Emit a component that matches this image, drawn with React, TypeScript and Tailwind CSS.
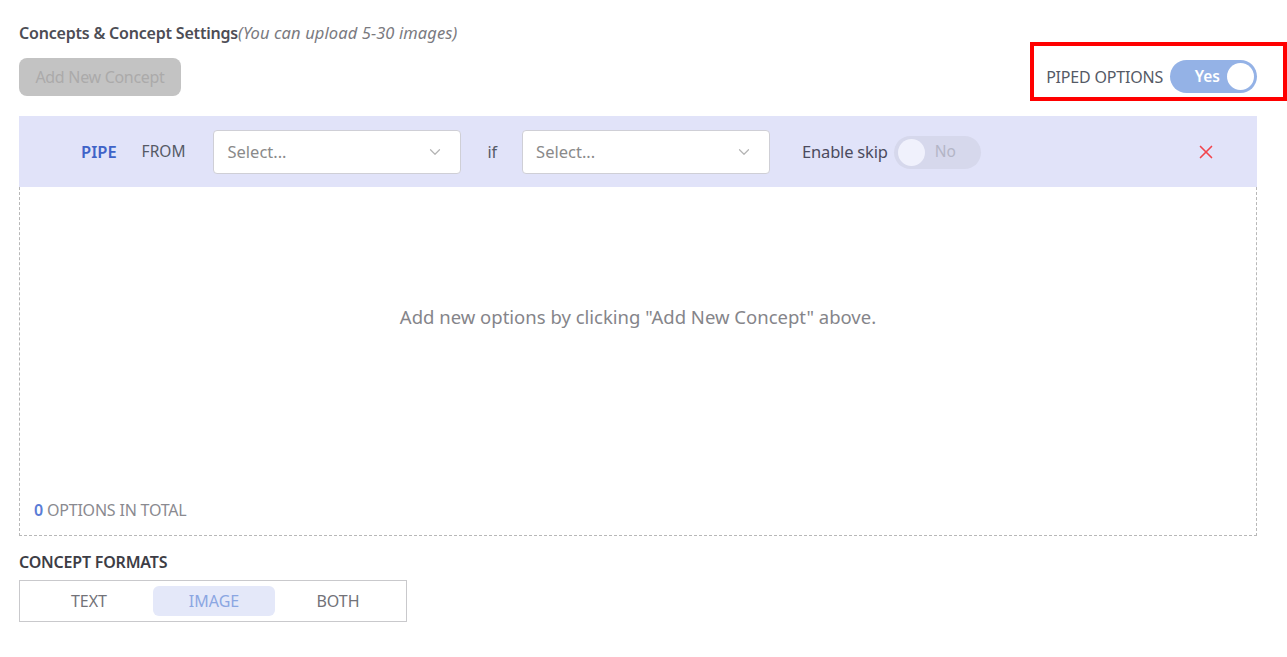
import { ChevronDown, X } from "lucide-react";

const font = { fontFamily: "'Noto Sans', 'Open Sans', sans-serif" };

function SelectBox() {
  return (
    <div className="flex h-[44px] w-[248px] items-center justify-between rounded-[4px] border border-[#cfcfd6] bg-white pl-[13px] pr-[16px]">
      <span className="text-[16.5px] text-[#8a8a8a]">Select...</span>
      <ChevronDown className="h-[18px] w-[18px] text-[#b5b5b5]" strokeWidth={1.6} />
    </div>
  );
}

export default function App() {
  return (
    <div className="min-h-[657px] w-[1287px] bg-white px-[19px] pt-[21px] text-[#4a4a4a]" style={font}>
      <div className="w-[1238px]">
        <p className="leading-[24px]">
          <span className="text-[16px] font-semibold tracking-[-0.2px] text-[#4d4d55]">Concepts &amp; Concept Settings</span>
          <span className="text-[16.5px] italic tracking-[0.1px] text-[#7a7a80]">(You can upload 5-30 images)</span>
        </p>

        <div className="mt-[13px] flex items-start justify-between">
          <button className="h-[38px] w-[162px] rounded-[8px] bg-[#c3c3c3] text-[16px] tracking-[-0.3px] text-[#abaaaa]">
            Add New Concept
          </button>
          <div className="relative mt-[2px] flex items-center gap-[7px]">
            <div className="pointer-events-none absolute -bottom-[8px] -left-[16px] -right-[30px] -top-[18px] border-4 border-[#ff0000]" />
            <span className="text-[16px] tracking-[-0.2px] text-[#555a66]">PIPED OPTIONS</span>
            <div className="flex h-[33px] w-[87px] items-center justify-end rounded-full bg-[#94b2e6] pr-[3px]">
              <span className="mr-[7px] text-[15.5px] font-semibold text-white">Yes</span>
              <span className="h-[27px] w-[27px] rounded-full bg-white" />
            </div>
          </div>
        </div>

        <div className="mt-[20px] flex h-[71px] items-center bg-[#e1e3f9] pl-[62px] pr-[40px] pt-[1px]">
          <span className="text-[16.5px] font-semibold text-[#3f63c8]">PIPE</span>
          <span className="ml-[25px] text-[15.5px] text-[#555a66]">FROM</span>
          <div className="ml-[28px]">
            <SelectBox />
          </div>
          <span className="ml-[26px] text-[16px] text-[#555a66]">if</span>
          <div className="ml-[25px]">
            <SelectBox />
          </div>
          <span className="ml-[32px] text-[16.5px] tracking-[-0.2px] text-[#4b4b5e]">Enable skip</span>
          <div className="ml-[6px] flex h-[33px] w-[87px] items-center rounded-full bg-[#d6d8ec] pl-[4px]">
            <span className="h-[27px] w-[27px] rounded-full bg-[#f0f1fc]" />
            <span className="ml-[10px] text-[15.5px] text-[#b3b5c6]">No</span>
          </div>
          <X className="ml-auto h-[22px] w-[22px] text-[#f2444c]" strokeWidth={1.8} />
        </div>

        <div className="flex h-[349px] flex-col border-x border-b border-dashed border-[#b8b8b8] pl-[14px]">
          <div className="flex flex-1 items-center justify-center pb-[52px] pr-[14px]">
            <p className="text-[18.5px] text-[#85858a]">Add new options by clicking "Add New Concept" above.</p>
          </div>
          <p className="pb-[13px] text-[16px] tracking-[-0.2px] text-[#8a8a90]">
            <span className="font-semibold text-[#5a7cd6]">0</span> OPTIONS IN TOTAL
          </p>
        </div>

        <p className="mt-[14px] text-[16px] font-semibold tracking-[-0.2px] text-[#3d3d45]">CONCEPT FORMATS</p>
        <div className="mt-[6px] flex h-[42px] w-[388px] items-center border border-[#c9c9cc] px-[5px]">
          <div className="flex h-[30px] w-[128px] items-center justify-center text-[16px] text-[#727278]">TEXT</div>
          <div className="flex h-[30px] w-[122px] items-center justify-center rounded-[6px] bg-[#e4e8f9] text-[16px] text-[#8ba6e2]">
            IMAGE
          </div>
          <div className="flex h-[30px] w-[126px] items-center justify-center text-[16px] text-[#727278]">BOTH</div>
        </div>
      </div>
    </div>
  );
}
